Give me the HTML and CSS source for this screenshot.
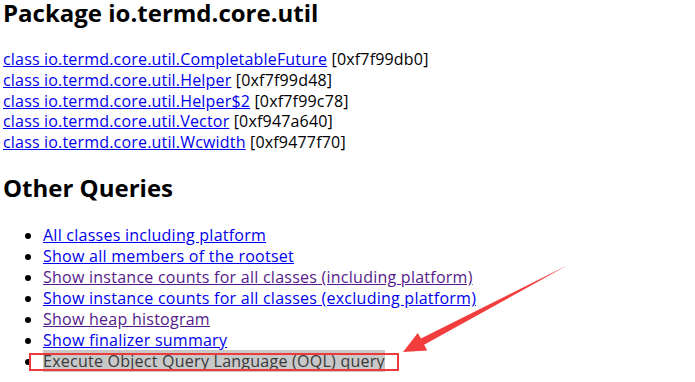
FILE: index.html
```html
<!DOCTYPE html>
<html>
<head>
<meta charset="utf-8">
<title>Package io.termd.core.util</title>
<link rel="stylesheet" href="styles.css">
</head>
<body>
<h1 class="title">Package io.termd.core.util</h1>
<div class="classes">
<div class="row"><a href="#">class io.termd.core.util.CompletableFuture</a> [0xf7f99db0]</div>
<div class="row"><a href="#">class io.termd.core.util.Helper</a> [0xf7f99d48]</div>
<div class="row"><a href="#">class io.termd.core.util.Helper$2</a> [0xf7f99c78]</div>
<div class="row"><a href="#">class io.termd.core.util.Vector</a> [0xf947a640]</div>
<div class="row"><a href="#">class io.termd.core.util.Wcwidth</a> [0xf9477f70]</div>
</div>
<h2 class="title sub">Other Queries</h2>
<ul class="queries">
<li><a href="#">All classes including platform</a></li>
<li><a href="#">Show all members of the rootset</a></li>
<li><a href="#" class="visited">Show instance counts for all classes (including platform)</a></li>
<li><a href="#">Show instance counts for all classes (excluding platform)</a></li>
<li><a href="#" class="visited">Show heap histogram</a></li>
<li><a href="#">Show finalizer summary</a></li>
<li><a href="#" class="selected">Execute Object Query Language (OQL) query</a></li>
</ul>
<div class="markbox"></div>
<svg class="arrow" width="695" height="382" viewBox="0 0 695 382">
<polygon points="568,265 424.1,344.8 427.2,350.6 403,352 417.8,332.9 420.9,338.6" fill="#f23d3d"/>
</svg>
</body>
</html>
```
FILE: styles.css
```css
html, body {
  margin: 0;
  padding: 0;
  background: #fff;
}
body {
  position: relative;
  width: 695px;
  height: 382px;
  overflow: hidden;
  padding-left: 3px;
  box-sizing: border-box;
  font-family: "Open Sans", "Noto Sans CJK SC", sans-serif;
  font-size: 16px;
  line-height: 21px;
  color: #000;
}
a {
  color: #0000ee;
  text-decoration: underline;
}
a.visited {
  color: #551a8b;
}
.classes {
  letter-spacing: 0.18px;
}
.queries {
  letter-spacing: 0.25px;
}
.title {
  font-size: 24px;
  font-weight: bold;
  line-height: 26px;
  margin: 0;
}
.classes {
  margin-top: 23px;
  line-height: 20.8px;
}
h2.sub {
  margin-top: 22px;
}
.queries {
  margin: 24px 0 0;
  padding-left: 40px;
}
.queries li {
  line-height: 21px;
}
a.selected {
  color: #383838;
  background: #c8c8c8;
  text-decoration: none;
}
.markbox {
  position: absolute;
  left: 29px;
  top: 353px;
  width: 366px;
  height: 14px;
  border: 2px solid #ec3b3b;
}
.arrow {
  position: absolute;
  left: 0;
  top: 0;
  pointer-events: none;
}
```
